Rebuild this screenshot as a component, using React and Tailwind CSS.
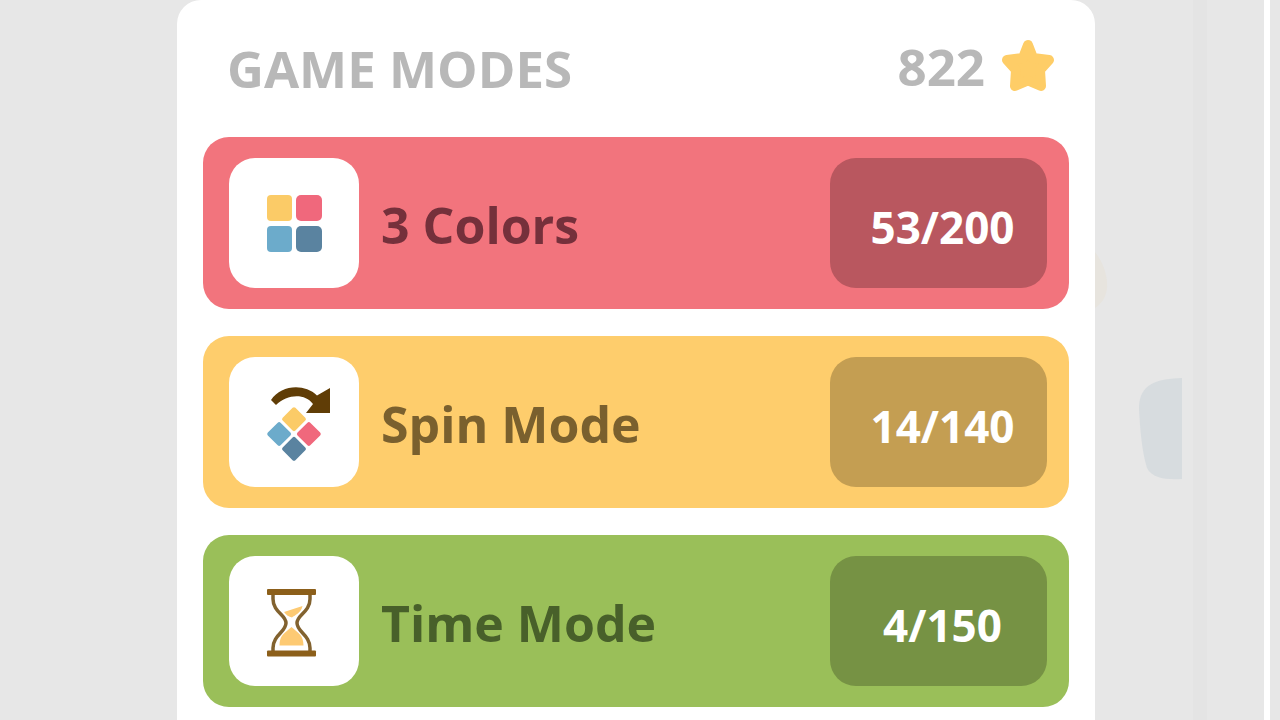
import { useState } from "react";

const ColorsIcon = () => (
  <svg viewBox="0 0 130 130" className="h-full w-full" aria-hidden="true">
    <rect x="38" y="37" width="25" height="26" rx="4" fill="#fbcb67" />
    <rect x="67" y="37" width="26" height="26" rx="5" fill="#f0687c" />
    <rect x="38" y="68" width="25" height="26" rx="4" fill="#6cabcb" />
    <rect x="67" y="68" width="26" height="26" rx="5" fill="#5a83a0" />
  </svg>
);

const SpinIcon = () => (
  <svg viewBox="0 0 130 130" className="h-full w-full" aria-hidden="true">
    <path
      d="M42 43 C52 28 75 26 88 38.5 L101 31 V56 H77 L84 47 C76 36 58 37 47 48 Z"
      fill="#603d06"
    />
    <g transform="rotate(45 65 77)">
      <rect x="45.5" y="57.5" width="18" height="18" rx="2" fill="#fbcb67" />
      <rect x="66.5" y="57.5" width="18" height="18" rx="2" fill="#f0687c" />
      <rect x="45.5" y="78.5" width="18" height="18" rx="2" fill="#6cabcb" />
      <rect x="66.5" y="78.5" width="18" height="18" rx="2" fill="#5a83a0" />
    </g>
  </svg>
);

const TimeIcon = () => (
  <svg viewBox="0 0 130 130" className="h-full w-full" aria-hidden="true">
    <path
      d="M44 38 V43 C44 56 57 59 57 67 C57 76 44 79 44 92 V96 M81 38 V43 C81 56 68 59 68 67 C68 76 81 79 81 92 V96"
      fill="none"
      stroke="#82622f"
      strokeWidth="3.5"
    />
    <path d="M55 56 L73.5 50 C72 57 66 59 63 61.5 C60 61 57 59 55 56 Z" fill="#fdca73" />
    <path d="M50.5 89.5 C50.5 79 56 77 62.5 71 C69 77 74.5 79 74.5 89.5 Z" fill="#fdca73" />
    <rect x="38" y="33" width="49" height="6" rx="1" fill="#8c5f1a" />
    <rect x="38" y="94.5" width="49" height="6" rx="1" fill="#8c5f1a" />
  </svg>
);

const StarIcon = () => (
  <svg viewBox="0 0 54 54" className="h-[54px] w-[54px]" aria-hidden="true">
    <path
      d="M27 6 L32 19 L48 21 L39 31 L40 47 L27 41.5 L14 47 L15 31 L6 21 L22 19 Z"
      fill="#fecd67"
      stroke="#fecd67"
      strokeWidth="10"
      strokeLinejoin="round"
    />
  </svg>
);

const modes = [
  {
    id: "colors",
    name: "3 Colors",
    score: "53/200",
    icon: ColorsIcon,
    row: "bg-[#f2747d]",
    label: "text-[#75303b]",
    badge: "bg-[#b9575f]",
  },
  {
    id: "spin",
    name: "Spin Mode",
    score: "14/140",
    icon: SpinIcon,
    row: "bg-[#fecd6c]",
    label: "text-[#7a602e]",
    badge: "bg-[#c49e52]",
  },
  {
    id: "time",
    name: "Time Mode",
    score: "4/150",
    icon: TimeIcon,
    row: "bg-[#9abf59]",
    label: "text-[#48602a]",
    badge: "bg-[#769244]",
  },
];

const ModeButton = ({ mode, selected, onSelect }) => {
  const Icon = mode.icon;

  return (
    <button
      type="button"
      aria-pressed={selected}
      onClick={() => onSelect(mode.id)}
      className={`flex h-[172px] w-full cursor-pointer items-center rounded-[26px] pr-[22px] pl-[26px] text-left ${mode.row}`}
    >
      <span className="h-[130px] w-[130px] shrink-0 rounded-[26px] bg-white">
        <Icon />
      </span>
      <span className={`flex-1 pt-1 pl-[22px] text-[50px] leading-[60px] ${mode.label}`}>
        {mode.name}
      </span>
      <span
        className={`flex h-[130px] w-[217px] shrink-0 items-center justify-center rounded-[26px] pt-2 pl-2 text-[44px] leading-[60px] text-white ${mode.badge}`}
      >
        {mode.score}
      </span>
    </button>
  );
};

const App = () => {
  const [selected, setSelected] = useState(null);

  return (
    <div className="grid h-screen grid-cols-[177px_minmax(0,1fr)_185px] overflow-hidden bg-[#e7e7e7] font-['Open_Sans','Noto_Sans',sans-serif] font-bold">
      <div />

      {/* Panel */}
      <main className="min-h-full rounded-t-[24px] bg-white px-[26px]">
        <header className="flex h-[137px] items-center justify-between pr-[14px] pb-[2px] pl-6 text-[#b8b8b8]">
          <h1 className="text-[51px] leading-[60px]">GAME MODES</h1>
          <p className="flex items-center gap-4 pb-1 text-[51px] leading-[60px]">
            822
            <StarIcon />
          </p>
        </header>

        <div className="flex flex-col gap-[27px]">
          {modes.map((mode) => (
            <ModeButton
              key={mode.id}
              mode={mode}
              selected={selected === mode.id}
              onSelect={setSelected}
            />
          ))}
        </div>
      </main>

      {/* Faded board behind the panel */}
      <div className="flex">
        <svg viewBox="0 0 98 720" className="h-[720px] w-[98px]" aria-hidden="true">
          <path d="M0 252 C8 262 13 276 12 288 C11 298 6 304 0 308 Z" fill="#e7e4de" />
          <path
            d="M87 378 C63 379 44 383 44 408 C45 430 47 452 52 468 C57 478 70 480 87 479 Z"
            fill="#d7dcdf"
          />
        </svg>
        <div className="w-[14px] bg-[#e4e4e4]" />
        <div className="flex-1" />
        <div className="w-[6px] bg-white" />
        <div className="w-[10px]" />
      </div>
    </div>
  );
};

export default App;
